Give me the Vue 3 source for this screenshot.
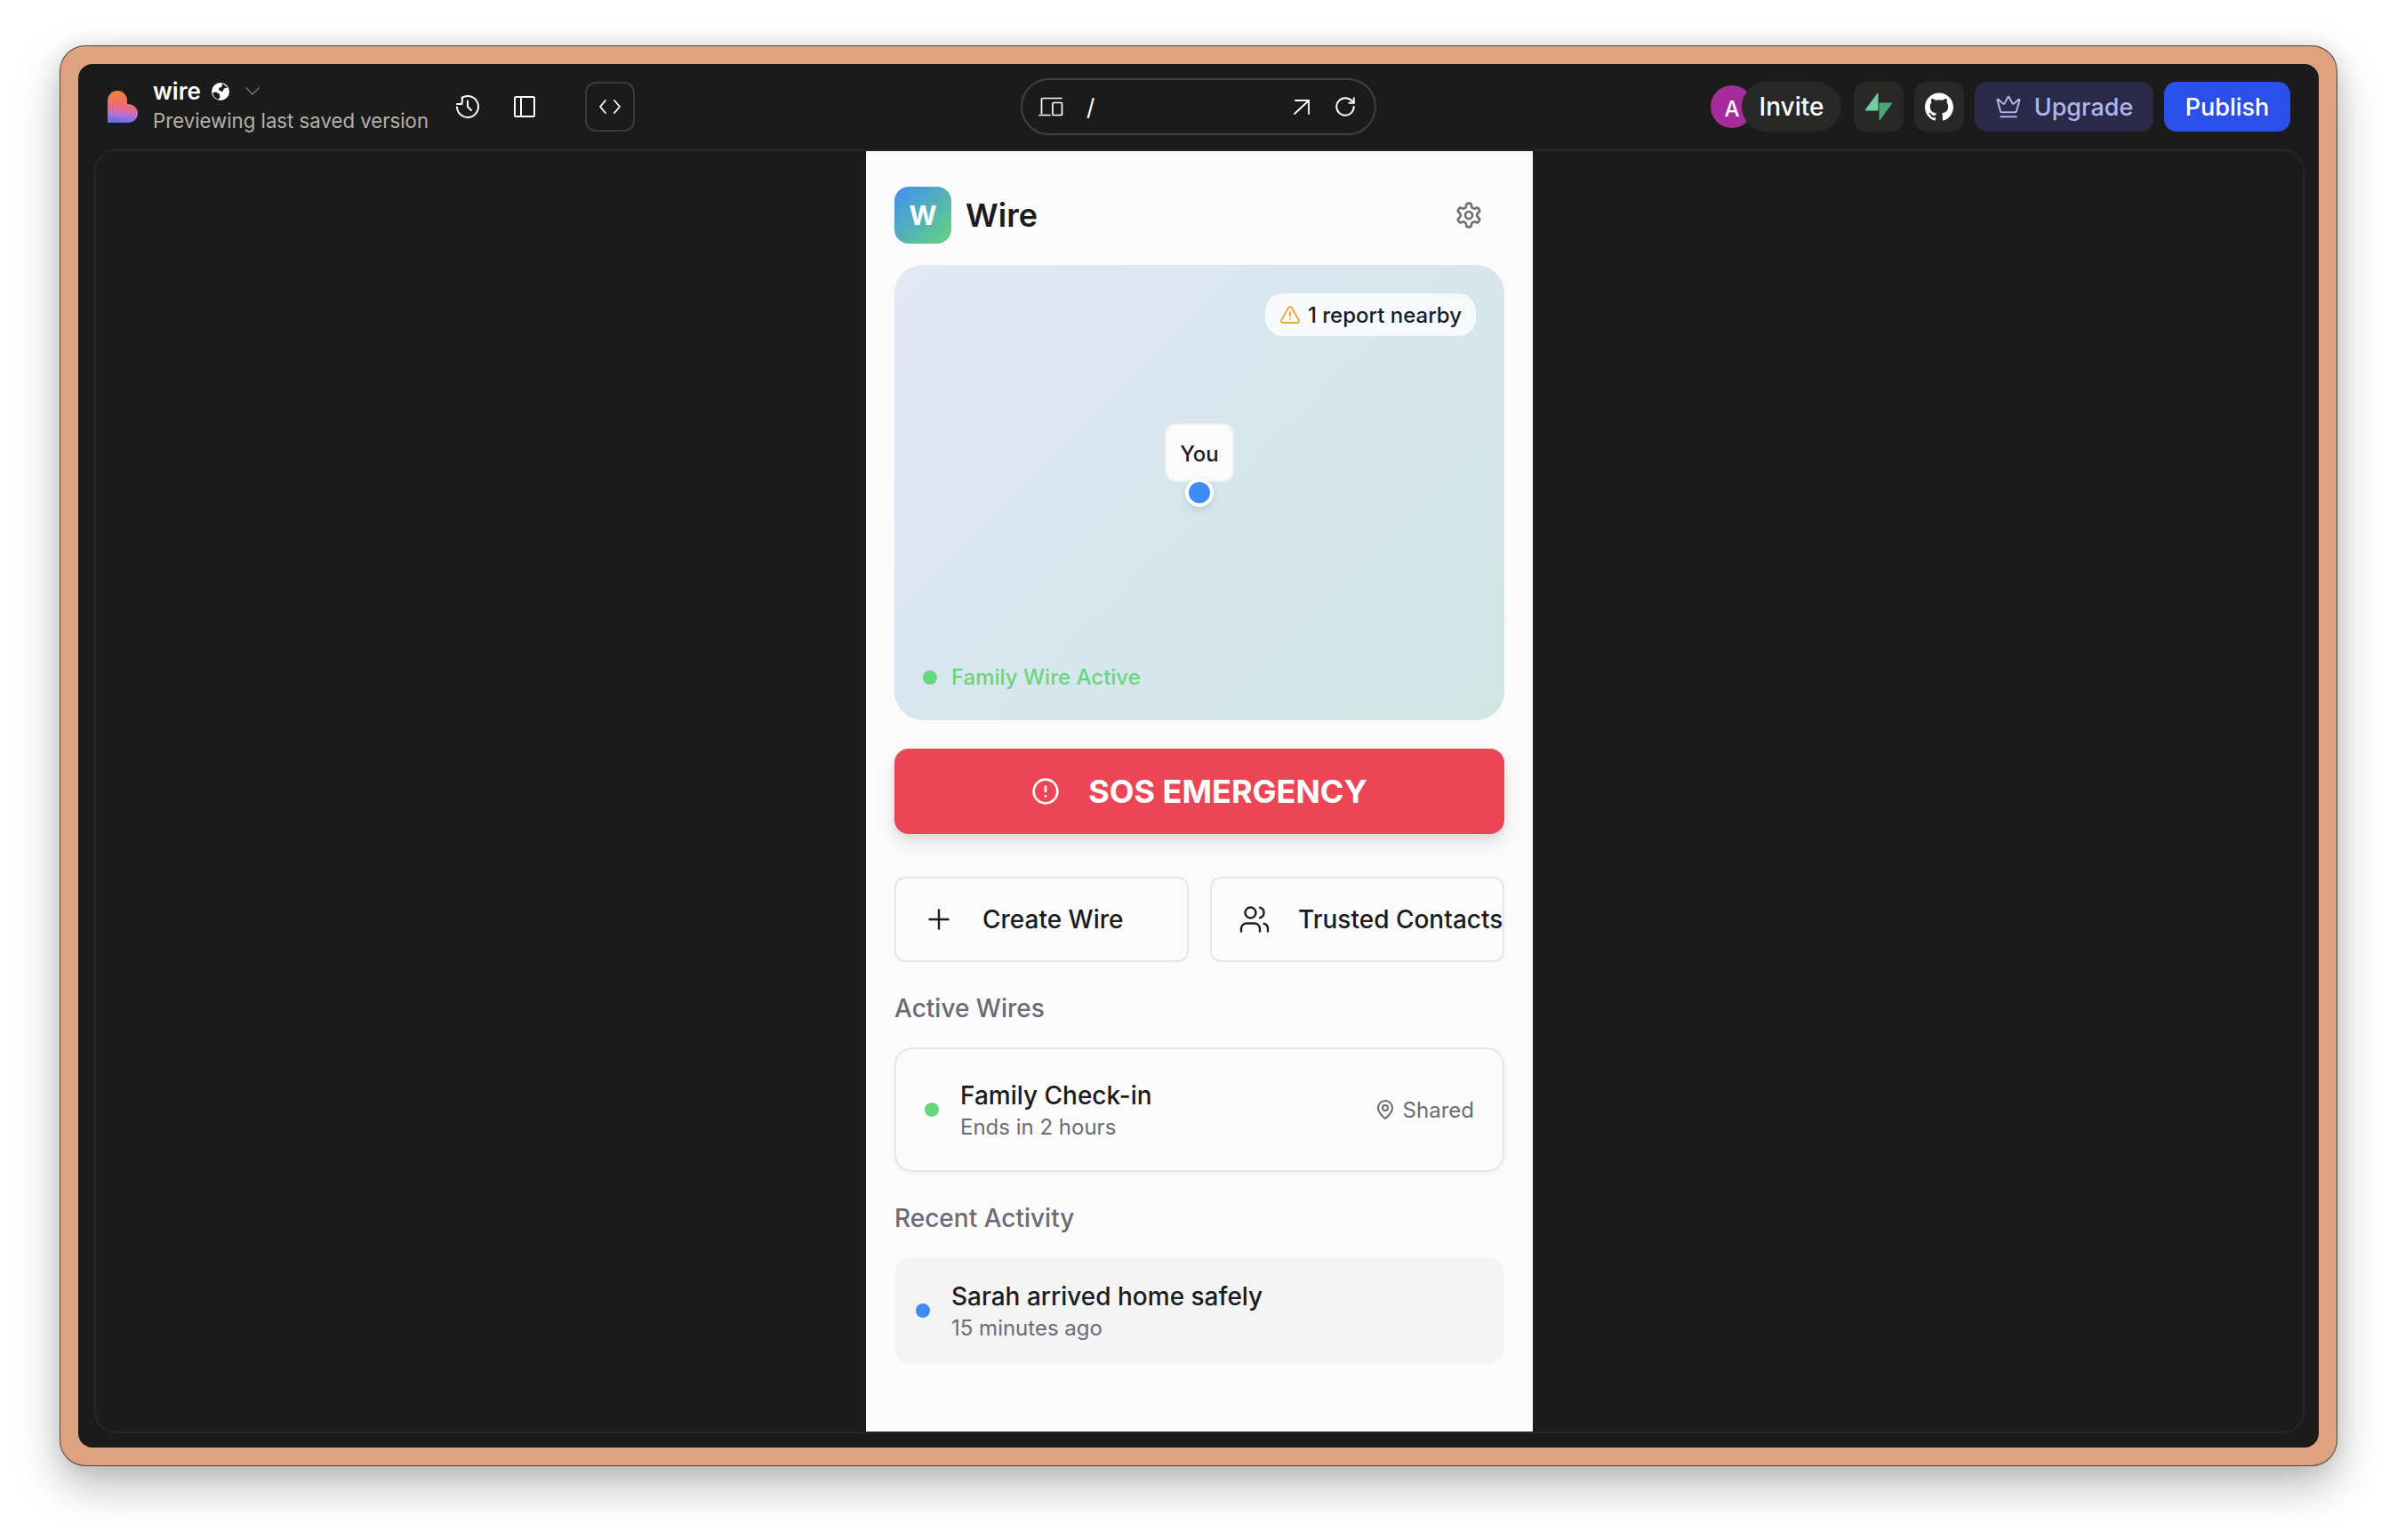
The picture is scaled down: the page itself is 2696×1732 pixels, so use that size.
<template>
  <div class="page">
    <div class="window">
      <div class="shell">

        <!-- Top bar -->
        <header class="topbar">
          <div class="bar-left">
            <svg class="brand" viewBox="0 0 34 36">
              <defs>
                <linearGradient id="heart" x1="0.55" y1="0" x2="0.45" y2="1">
                  <stop offset="0" stop-color="#f0852d" />
                  <stop offset="0.5" stop-color="#ee6a78" />
                  <stop offset="0.75" stop-color="#b96fd8" />
                  <stop offset="1" stop-color="#5f6fe8" />
                </linearGradient>
              </defs>
              <path fill="url(#heart)" d="M0 11 A11 11 0 0 1 22 11 V15 H24 A10.5 10.5 0 0 1 34 25.5 A10.5 10.5 0 0 1 23.5 36 H0 Z" />
            </svg>
            <div class="project">
              <div class="project-name">
                <span>wire</span>
                <svg class="globe" viewBox="0 0 20 20">
                  <circle cx="10" cy="10" r="10" fill="#fff" />
                  <path fill="#1b1b1b" d="M12.5 1 L18 5.5 L14 6.5 L12.5 10 L8.5 9 L8 6 L11 5 Z M1 11.5 L5 10.5 L9 13 L9.5 16.5 L7 19 L3 16 Z" />
                </svg>
                <svg class="chev" viewBox="0 0 16 16" fill="none" stroke="#6e6e6e" stroke-width="1.6" stroke-linecap="round" stroke-linejoin="round">
                  <path d="m1 4 7 7 7-7" />
                </svg>
              </div>
              <div class="project-sub">Previewing last saved version</div>
            </div>
            <svg class="bar-icon history" viewBox="0 0 28 28" fill="none" stroke="#fff" stroke-width="2" stroke-linecap="round" stroke-linejoin="round">
              <path d="M7.5 3.9 A12 12 0 1 1 2 14.5" />
              <path d="M2 11h5.5l.5-6" />
              <path d="M14 7.5V14l4 4" />
            </svg>
            <svg class="bar-icon sidebar" viewBox="0 0 32 32" fill="none" stroke="#fff" stroke-width="2" stroke-linecap="round" stroke-linejoin="round">
              <rect x="5" y="5" width="22" height="22" rx="1.5" />
              <path d="M12 5v22" />
            </svg>
            <button class="code-btn">
              <svg viewBox="0 0 28 24" fill="none" stroke="#fff" stroke-width="1.8" stroke-linecap="round" stroke-linejoin="round">
                <path d="m9 5-6 7 6 7" />
                <path d="m19 5 6 7-6 7" />
              </svg>
            </button>
          </div>

          <div class="urlbar">
            <svg class="url-icon" viewBox="0 0 28 24" fill="none" stroke="#fff" stroke-width="1.7" stroke-linecap="round" stroke-linejoin="round">
              <path d="M3.5 19.5V3.500a1 1 0 0 1 1-1H26" />
              <path d="M1 21.5h12" />
              <rect x="16" y="7.5" width="10.5" height="14" rx="1" />
            </svg>
            <span class="url-path">/</span>
            <svg class="url-icon open" viewBox="0 0 24 24" fill="none" stroke="#fff" stroke-width="1.8" stroke-linecap="round" stroke-linejoin="round">
              <path d="M5 5h15v15" />
              <path d="M4 20 20 5" />
            </svg>
            <svg class="url-icon reload" viewBox="0 0 24 24" fill="none" stroke="#fff" stroke-width="1.8" stroke-linecap="round" stroke-linejoin="round">
              <path d="M21 12a9 9 0 1 1-9-9c2.52 0 4.93 1 6.74 2.74L21 8" />
              <path d="M21 3v5h-5" />
            </svg>
          </div>

          <div class="bar-right">
            <div class="invite">
              <span class="avatar">A</span>
              <span class="invite-pill">Invite</span>
            </div>
            <button class="square-btn">
              <svg viewBox="0 0 32 32" stroke-width="1" stroke-linejoin="round">
                <path fill="#4aa878" stroke="#4aa878" d="M17 31 V12 H31 Z" />
                <path fill="#70cf9c" stroke="#70cf9c" d="M15 1 V20 H1 Z" />
              </svg>
            </button>
            <button class="square-btn">
              <svg viewBox="0 0 24 24" fill="#fff">
                <path d="M12 .297c-6.63 0-12 5.373-12 12 0 5.303 3.438 9.8 8.205 11.385.6.113.82-.258.82-.577 0-.285-.01-1.04-.015-2.04-3.338.724-4.042-1.61-4.042-1.61C4.422 18.07 3.633 17.7 3.633 17.7c-1.087-.744.084-.729.084-.729 1.205.084 1.838 1.236 1.838 1.236 1.07 1.835 2.809 1.305 3.495.998.108-.776.417-1.305.76-1.605-2.665-.3-5.466-1.332-5.466-5.93 0-1.31.465-2.38 1.235-3.22-.135-.303-.54-1.523.105-3.176 0 0 1.005-.322 3.3 1.23.96-.267 1.98-.399 3-.405 1.02.006 2.04.138 3 .405 2.28-1.552 3.285-1.23 3.285-1.23.645 1.653.24 2.873.12 3.176.765.84 1.23 1.91 1.23 3.22 0 4.61-2.805 5.625-5.475 5.92.42.36.81 1.096.81 2.22 0 1.606-.015 2.896-.015 3.286 0 .315.21.69.825.57C20.565 22.092 24 17.592 24 12.297c0-6.627-5.373-12-12-12" />
              </svg>
            </button>
            <button class="upgrade">
              <svg viewBox="0 0 24 24" fill="none" stroke="#b0b4ec" stroke-width="1.6" stroke-linecap="round" stroke-linejoin="round">
                <path d="M11.562 3.266a.5.5 0 0 1 .876 0L15.39 8.87a1 1 0 0 0 1.516.294L21.183 5.5a.5.5 0 0 1 .798.519l-2.834 10.246a1 1 0 0 1-.956.734H5.81a1 1 0 0 1-.957-.734L2.02 6.02a.5.5 0 0 1 .798-.519l4.276 3.664a1 1 0 0 0 1.516-.294z" />
                <path d="M5 21h14" />
              </svg>
              Upgrade
            </button>
            <button class="publish">Publish</button>
          </div>
        </header>

        <!-- Preview frame -->
        <div class="frame">
          <main class="phone">
            <div class="app-head">
              <div class="app-logo">W</div>
              <h1 class="app-title">Wire</h1>
              <svg class="gear" viewBox="0 0 24 24" fill="none" stroke="#6f6f7a" stroke-width="2" stroke-linecap="round" stroke-linejoin="round">
                <path d="M12.22 2h-.44a2 2 0 0 0-2 2v.18a2 2 0 0 1-1 1.73l-.43.25a2 2 0 0 1-2 0l-.15-.08a2 2 0 0 0-2.73.73l-.22.38a2 2 0 0 0 .73 2.73l.15.1a2 2 0 0 1 1 1.72v.51a2 2 0 0 1-1 1.74l-.15.09a2 2 0 0 0-.73 2.73l.22.38a2 2 0 0 0 2.73.73l.15-.08a2 2 0 0 1 2 0l.43.25a2 2 0 0 1 1 1.73V20a2 2 0 0 0 2 2h.44a2 2 0 0 0 2-2v-.18a2 2 0 0 1 1-1.73l.43-.25a2 2 0 0 1 2 0l.15.08a2 2 0 0 0 2.73-.73l.22-.39a2 2 0 0 0-.73-2.73l-.15-.08a2 2 0 0 1-1-1.74v-.5a2 2 0 0 1 1-1.74l.15-.09a2 2 0 0 0 .73-2.73l-.22-.38a2 2 0 0 0-2.73-.73l-.15.08a2 2 0 0 1-2 0l-.43-.25a2 2 0 0 1-1-1.73V4a2 2 0 0 0-2-2z" />
                <circle cx="12" cy="12" r="3" />
              </svg>
            </div>

            <section class="map">
              <div class="report">
                <svg viewBox="0 0 24 24" fill="none" stroke="#e5ae3c" stroke-width="2" stroke-linecap="round" stroke-linejoin="round">
                  <path d="m21.73 18-8-14a2 2 0 0 0-3.48 0l-8 14A2 2 0 0 0 4 21h16a2 2 0 0 0 1.73-3" />
                  <path d="M12 9v4" />
                  <path d="M12 17h.01" />
                </svg>
                <span>1 report nearby</span>
              </div>
              <div class="you">
                <div class="you-label">You</div>
                <div class="you-dot"></div>
              </div>
              <div class="map-status">
                <span class="dot green"></span>
                <span>Family Wire Active</span>
              </div>
            </section>

            <button class="sos">
              <svg viewBox="0 0 24 24" fill="none" stroke="#fff" stroke-width="2" stroke-linecap="round" stroke-linejoin="round">
                <circle cx="12" cy="12" r="10" />
                <path d="M12 8v4" />
                <path d="M12 16h.01" />
              </svg>
              SOS EMERGENCY
            </button>

            <div class="actions">
              <button class="action">
                <svg viewBox="0 0 24 24" fill="none" stroke="#1c1c1f" stroke-width="1.6" stroke-linecap="round" stroke-linejoin="round">
                  <path d="M5 12h14" />
                  <path d="M12 5v14" />
                </svg>
                Create Wire
              </button>
              <button class="action">
                <svg viewBox="0 0 24 24" fill="none" stroke="#1c1c1f" stroke-width="1.6" stroke-linecap="round" stroke-linejoin="round">
                  <path d="M16 21v-2a4 4 0 0 0-4-4H6a4 4 0 0 0-4 4v2" />
                  <circle cx="9" cy="7" r="4" />
                  <path d="M22 21v-2a4 4 0 0 0-3-3.87" />
                  <path d="M16 3.13a4 4 0 0 1 0 7.75" />
                </svg>
                Trusted Contacts
              </button>
            </div>

            <h2 class="section-title">Active Wires</h2>
            <div class="wire-card">
              <span class="dot green"></span>
              <div class="wire-text">
                <div class="item-title">Family Check-in</div>
                <div class="item-sub">Ends in 2 hours</div>
              </div>
              <div class="shared">
                <svg viewBox="0 0 24 24" fill="none" stroke="#6b6b75" stroke-width="2" stroke-linecap="round" stroke-linejoin="round">
                  <path d="M20 10c0 6-8 12-8 12s-8-6-8-12a8 8 0 0 1 16 0Z" />
                  <circle cx="12" cy="10" r="3" />
                </svg>
                Shared
              </div>
            </div>

            <h2 class="section-title">Recent Activity</h2>
            <div class="activity-card">
              <span class="dot blue"></span>
              <div>
                <div class="item-title">Sarah arrived home safely</div>
                <div class="item-sub">15 minutes ago</div>
              </div>
            </div>
          </main>
        </div>

      </div>
    </div>
  </div>
</template>

<script setup>
</script>

<style>
body {
  margin: 0;
  background: #fff;
}
</style>

<style scoped>
.page {
  width: 2696px;
  height: 1732px;
  padding: 52px 0 0 68px;
  box-sizing: border-box;
  font-family: Inter, "Liberation Sans", sans-serif;
  overflow: hidden;
}
.window {
  width: 2560px;
  height: 1596px;
  padding: 20px;
  box-sizing: border-box;
  background: #dfa280;
  border-radius: 28px;
  box-shadow: 0 0 0 1px #4a4540, 0 22px 50px rgba(0, 0, 0, 0.28), 0 0 24px rgba(0, 0, 0, 0.1);
}
.shell {
  height: 100%;
  background: #1b1b1b;
  border-radius: 16px;
  display: flex;
  flex-direction: column;
  padding: 0 16px 16px 18px;
  box-sizing: border-box;
}

/* Top bar */
.topbar {
  height: 96px;
  flex: none;
  display: flex;
  align-items: center;
  justify-content: space-between;
  color: #fff;
  position: relative;
}
.bar-left {
  display: flex;
  align-items: center;
}
.brand {
  width: 34px;
  height: 36px;
  margin-left: 15px;
  flex: none;
}
.project {
  margin-left: 17px;
  width: 310px;
}
.project-name {
  display: flex;
  align-items: center;
  font-size: 26px;
  font-weight: 600;
  line-height: 32px;
}
.globe {
  width: 20px;
  height: 20px;
  margin-left: 12px;
}
.chev {
  width: 16px;
  height: 16px;
  margin-left: 18px;
}
.project-sub {
  font-size: 22.2px;
  line-height: 34px;
  color: #b3b1aa;
  white-space: nowrap;
}
.bar-icon {
  flex: none;
}
.history {
  width: 28px;
  height: 28px;
  margin-left: 30px;
}
.sidebar {
  width: 32px;
  height: 32px;
  margin-left: 34px;
}
.code-btn {
  width: 56px;
  height: 56px;
  margin-left: 52px;
  padding: 0;
  background: transparent;
  border: 2px solid #3b3b3b;
  border-radius: 12px;
  display: flex;
  align-items: center;
  justify-content: center;
}
.code-btn svg {
  width: 28px;
  height: 24px;
}
.urlbar {
  position: absolute;
  left: 1042px;
  top: 16px;
  width: 400px;
  height: 64px;
  box-sizing: border-box;
  border: 2px solid #414141;
  border-radius: 32px;
  display: flex;
  align-items: center;
  padding: 0 20px 0 18px;
}
.url-icon {
  width: 28px;
  height: 24px;
  flex: none;
}
.url-path {
  font-size: 26px;
  margin-left: 26px;
  flex: 1;
}
.open {
  width: 24px;
}
.reload {
  width: 26px;
  height: 26px;
  margin-left: 24px;
}
.bar-right {
  display: flex;
  align-items: center;
  gap: 12px;
  margin-right: 16px;
}
.invite {
  display: flex;
  align-items: center;
  margin-right: 2px;
}
.avatar {
  width: 48px;
  height: 48px;
  border-radius: 50%;
  background: #a52c9b;
  font-size: 24px;
  font-weight: 500;
  display: flex;
  align-items: center;
  justify-content: center;
  padding-top: 4px;
  box-sizing: border-box;
}
.invite-pill {
  height: 56px;
  width: 112px;
  margin-left: -13px;
  border-radius: 28px;
  background: #282826;
  font-size: 28px;
  font-weight: 500;
  display: flex;
  align-items: center;
  justify-content: center;
}
.square-btn {
  width: 56px;
  height: 56px;
  padding: 0;
  border: none;
  border-radius: 14px;
  background: #282826;
  display: flex;
  align-items: center;
  justify-content: center;
}
.square-btn svg {
  width: 32px;
  height: 32px;
}
.upgrade,
.publish {
  height: 56px;
  border: none;
  border-radius: 14px;
  font-family: inherit;
  font-size: 27px;
  font-weight: 500;
  display: flex;
  align-items: center;
  justify-content: center;
  padding: 0;
}
.upgrade {
  width: 201px;
  gap: 14px;
  background: #2a2a48;
  color: #b0b4ec;
}
.upgrade svg {
  width: 30px;
  height: 30px;
}
.publish {
  width: 142px;
  background: #2b50ea;
  color: #fff;
}

/* Frame */
.frame {
  flex: 1;
  min-height: 0;
  border: 2px solid #262626;
  border-radius: 24px;
  display: flex;
  justify-content: center;
}
.phone {
  width: 750px;
  background: #fbfbfb;
  padding: 40px 32px 0;
  box-sizing: border-box;
  color: #1c1c1f;
}
.app-head {
  display: flex;
  align-items: center;
  height: 64px;
  gap: 16px;
  margin-bottom: 24px;
}
.app-logo {
  width: 64px;
  height: 64px;
  border-radius: 16px;
  background: linear-gradient(135deg, #3f8ff5, #68d37c);
  color: #fff;
  font-size: 30px;
  font-weight: 700;
  display: flex;
  align-items: center;
  justify-content: center;
}
.app-title {
  margin: 0;
  flex: 1;
  font-size: 36px;
  font-weight: 600;
}
.gear {
  width: 32px;
  height: 32px;
  margin-right: 24px;
}

/* Map */
.map {
  position: relative;
  height: 512px;
  border-radius: 32px;
  background: linear-gradient(135deg, #e3e9f5 0%, #d9e6f0 38%, #d2e6e4 100%);
}
.report {
  position: absolute;
  top: 32px;
  right: 32px;
  height: 48px;
  padding: 0 16px;
  box-sizing: border-box;
  border-radius: 20px;
  background: rgba(255, 255, 255, 0.8);
  display: flex;
  align-items: center;
  gap: 8px;
  font-size: 24px;
  font-weight: 500;
}
.report svg {
  width: 24px;
  height: 24px;
}
.you {
  position: absolute;
  left: 305px;
  top: 178px;
  width: 76px;
  display: flex;
  flex-direction: column;
  align-items: center;
}
.you-label {
  width: 78px;
  height: 66px;
  flex: none;
  box-sizing: border-box;
  border: 2px solid #f0f0f0;
  border-radius: 12px;
  background: #fbfbfb;
  font-size: 24px;
  font-weight: 500;
  padding-top: 2px;
  display: flex;
  align-items: center;
  justify-content: center;
}
.you-dot {
  width: 32px;
  height: 32px;
  flex: none;
  box-sizing: border-box;
  border: 4px solid #fff;
  border-radius: 50%;
  background: #3f8bf6;
  margin-top: -4px;
  box-shadow: 0 4px 10px rgba(0, 0, 0, 0.12);
}
.map-status {
  position: absolute;
  left: 32px;
  bottom: 32px;
  display: flex;
  align-items: center;
  gap: 16px;
  font-size: 24px;
  font-weight: 500;
  line-height: 32px;
  color: #68d67c;
}
.dot {
  width: 16px;
  height: 16px;
  border-radius: 50%;
  flex: none;
}
.dot.green {
  background: #68d67c;
}
.dot.blue {
  background: #3f8bf6;
}

/* SOS */
.sos {
  width: 100%;
  height: 96px;
  margin-top: 32px;
  border: none;
  border-radius: 16px;
  background: #ec4556;
  color: #fff;
  font-family: inherit;
  font-size: 36px;
  font-weight: 700;
  display: flex;
  align-items: center;
  justify-content: center;
  gap: 32px;
  box-shadow: 0 10px 20px rgba(0, 0, 0, 0.1), 0 4px 8px rgba(0, 0, 0, 0.06);
}
.sos svg {
  width: 32px;
  height: 32px;
}

/* Actions */
.actions {
  display: grid;
  grid-template-columns: 1fr 1fr;
  gap: 24px;
  margin-top: 48px;
}
.action {
  height: 96px;
  padding: 0 0 0 30px;
  background: transparent;
  border: 2px solid #e6e6e6;
  border-radius: 12px;
  color: #1c1c1f;
  font-family: inherit;
  font-size: 28px;
  font-weight: 500;
  display: flex;
  align-items: center;
  gap: 31px;
  white-space: nowrap;
  overflow: hidden;
}
.action svg {
  width: 36px;
  height: 36px;
  flex: none;
}

/* Lists */
.section-title {
  margin: 32px 0 24px;
  font-size: 28px;
  font-weight: 500;
  line-height: 40px;
  color: #6b6b75;
}
.wire-card {
  height: 140px;
  box-sizing: border-box;
  border: 2px solid #e6e6e6;
  border-radius: 20px;
  padding: 0 32px;
  display: flex;
  align-items: center;
  box-shadow: 0 2px 4px rgba(0, 0, 0, 0.05);
}
.wire-text {
  flex: 1;
  margin-left: 24px;
}
.item-title {
  font-size: 28px;
  font-weight: 500;
  line-height: 40px;
}
.item-sub {
  font-size: 24px;
  line-height: 32px;
  color: #6b6b75;
}
.shared {
  display: flex;
  align-items: center;
  gap: 8px;
  font-size: 24px;
  color: #6b6b75;
}
.shared svg {
  width: 24px;
  height: 24px;
}
.activity-card {
  height: 120px;
  box-sizing: border-box;
  background: #f4f4f5;
  border-radius: 20px;
  padding: 0 24px;
  display: flex;
  align-items: center;
  gap: 24px;
}
</style>
